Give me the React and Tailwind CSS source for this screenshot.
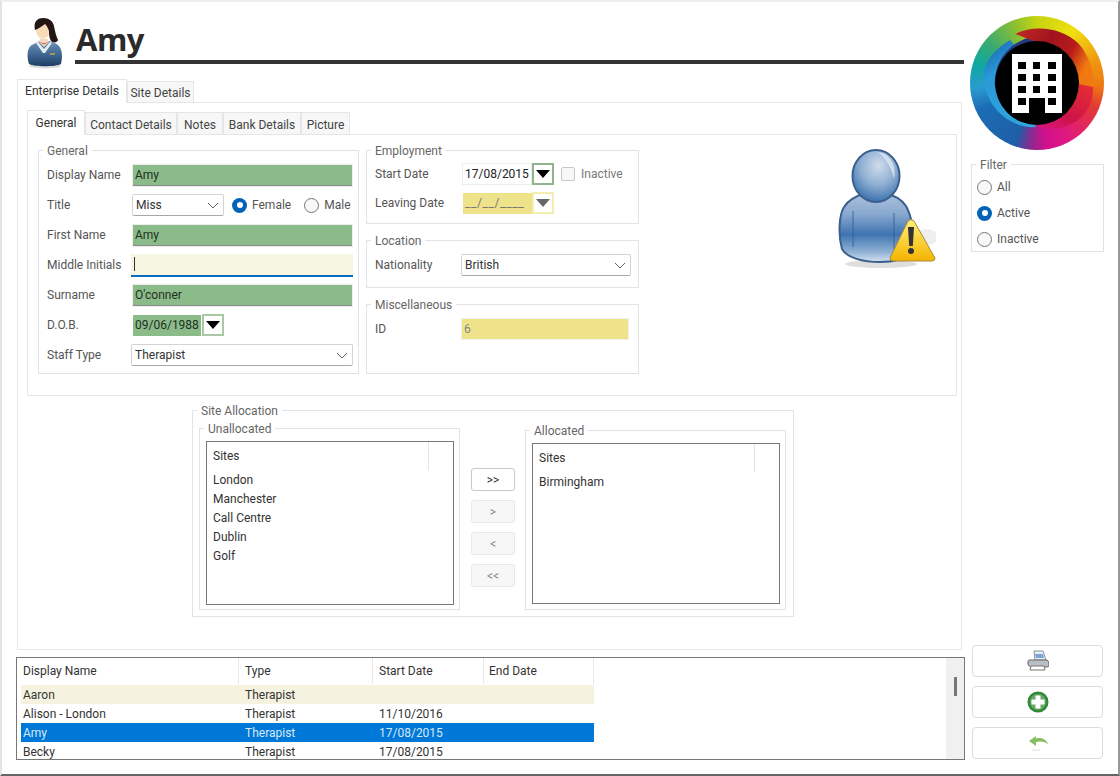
const F = "font-['Roboto','Noto_Sans',sans-serif]";

function Group({ label, className, children }) {
  return (
    <div className={"relative border border-[#e3e3e6] " + className}>
      <span className="absolute left-[4px] top-[-8px] bg-white px-[4px] text-[12px] leading-[16px] text-[#666]">{label}</span>
      {children}
    </div>
  );
}

function Row({ label, children, w = "w-[93px]" }) {
  return (
    <div className="flex h-[30px] items-center">
      <span className={"text-[12px] text-[#555] shrink-0 " + w}>{label}</span>
      {children}
    </div>
  );
}

function GreenInput({ value }) {
  return (
    <div className="flex h-[21px] w-[219px] items-center border-b border-[#8a8a8a] bg-[#8cbb8a] px-[2px] text-[12px] text-[#1f2f1f] shadow-[0_0_0_1px_#eee]">{value}</div>
  );
}

function Select({ value, className }) {
  return (
    <div className={"flex h-[22px] items-center justify-between rounded-[2px] border border-[#d4d4d4] border-b-[#a8a8a8] bg-white pl-[3px] pr-[4px] text-[12px] text-[#333] " + className}>
      <span>{value}</span>
      <svg width="12" height="7" viewBox="0 0 12 7" fill="none" stroke="#666" strokeWidth="1"><path d="M1 1l5 5 5-5" /></svg>
    </div>
  );
}

function Radio({ on, label, className = "" }) {
  return (
    <div className={"flex h-[16px] items-center gap-[5px] " + className}>
      {on ? (
        <span className="flex h-[15px] w-[15px] items-center justify-center rounded-full bg-[#0063b8]"><span className="h-[6px] w-[6px] rounded-full bg-white" /></span>
      ) : (
        <span className="h-[15px] w-[15px] rounded-full border border-[#777] bg-[#f8f8f8]" />
      )}
      <span className="text-[12px] text-[#555]">{label}</span>
    </div>
  );
}

function DateBtn({ ring, fill = "#000" }) {
  return (
    <span className={"flex h-[22px] w-[22px] items-center justify-center border-2 bg-white " + ring}>
      <svg width="14" height="8" viewBox="0 0 14 8"><path d="M0 0h14L7 8z" fill={fill} /></svg>
    </span>
  );
}

function Tab({ children, active, className = "" }) {
  return (
    <div className={"flex items-center justify-center border border-b-0 border-[#e6e6e8] text-[12px] " + (active ? "bg-white text-[#333] " : "bg-[#f7f7f7] text-[#444] ") + className}>{children}</div>
  );
}

function ListBox({ items, className }) {
  return (
    <div className={"border border-[#777] bg-white " + className}>
      <div className="flex h-[28px]">
        <div className="flex w-[222px] items-center border-r border-[#e5e5e5] pl-[6px] text-[12px] text-[#333]">Sites</div>
      </div>
      <div className="flex flex-col pl-[6px]">
        {items.map((s) => (
          <div key={s} className="flex h-[19px] items-center text-[12px] text-[#333]">{s}</div>
        ))}
      </div>
    </div>
  );
}

function MoveBtn({ label, on }) {
  return (
    <div className={"flex h-[23px] w-[44px] items-center justify-center rounded-[3px] border text-[12px] " + (on ? "border-[#c8c8c8] text-[#333] bg-white" : "border-[#e8e8e8] bg-[#f7f7f7] text-[#888]")}>{label}</div>
  );
}

function Logo() {
  return (
    <div className="relative h-[134px] w-[134px] rounded-full bg-[conic-gradient(from_0deg,#c6d412_0deg,#efe00f_35deg,#f09a10_68deg,#ee7a12_92deg,#e23a34_112deg,#e01880_150deg,#d0108c_172deg,#8a2a90_186deg,#1f5ea8_200deg,#1b6db4_245deg,#2a9ad0_265deg,#0fa8a0_288deg,#3aaa70_310deg,#8fc030_340deg,#c6d412_360deg)]">
      <svg className="absolute left-0 top-0" width="134" height="134" viewBox="0 0 134 134">
        <defs>
          <linearGradient id="lgA" x1="0" y1="0" x2="1" y2="0.4">
            <stop offset="0" stopColor="#c42a22" /><stop offset="0.45" stopColor="#a0141f" /><stop offset="0.75" stopColor="#b81a1c" /><stop offset="1" stopColor="#f07a10" />
          </linearGradient>
          <linearGradient id="lgB" x1="0.8" y1="0" x2="0.1" y2="1">
            <stop offset="0" stopColor="#e42c36" /><stop offset="0.6" stopColor="#cc1448" /><stop offset="1" stopColor="#d81480" />
          </linearGradient>
          <linearGradient id="lgC" x1="0.7" y1="1" x2="0.2" y2="0">
            <stop offset="0" stopColor="#2ea6de" /><stop offset="0.7" stopColor="#2a9ad8" /><stop offset="1" stopColor="#1c68b0" />
          </linearGradient>
        </defs>
        <path d="M66 111C42 113 15 92 14 62C13 50 20 36 40 24L70 60Z" fill="url(#lgC)" />
        <path d="M25 72C22 40 48 17 78 20L70 50Z" fill="#263a80" />
        <path d="M45 18C65 8 92 12 108 27C120 40 125 58 123 72L109 68A42 42 0 0 0 66 25.5C58 24 52 20 45 18Z" fill="url(#lgA)" />
        <path d="M123 71C124 92 110 108 90 112C80 114 70 112 63 109L67 109.5A42 42 0 0 0 109 68Z" fill="url(#lgB)" />
      </svg>
      <div className="absolute left-[25px] top-[25px] flex h-[84px] w-[84px] items-center justify-center rounded-full bg-black">
        <svg width="50" height="59" viewBox="0 0 50 59">
          <path fillRule="evenodd" fill="#fff" d="M0 0h50v59H33V44H17v15H0z
            M6 8v7h8V8z M21 8v7h7V8z M36 8v7h8V8z
            M6 20v7h8v-7z M21 20v7h7v-7z M36 20v7h8v-7z
            M6 32v7h8v-7z M21 32v7h7v-7z M36 32v7h8v-7z
            M6 44v7h8v-7z M36 44v7h8v-7z" />
        </svg>
      </div>
    </div>
  );
}

function Avatar() {
  return (
    <svg width="36" height="52" viewBox="0 0 36 52">
      <defs>
        <linearGradient id="suit" x1="0" y1="0" x2="0" y2="1"><stop offset="0" stopColor="#6f93b8" /><stop offset="0.6" stopColor="#3a618c" /><stop offset="1" stopColor="#1d3d63" /></linearGradient>
      </defs>
      <ellipse cx="19" cy="49" rx="16" ry="2.5" fill="#ddd" />
      <path d="M3 47C0 38 2 30 6 28c3-2 6-3 8-4h9c3 1 7 2 9 4 4 3 5 11 3 19-5 3-27 3-32 0z" fill="url(#suit)" />
      <path d="M14 22h8l1 3-5 5-5-5z" fill="#f3d9c0" />
      <path d="M12 25l6 7 6-7 2 1-7 10h-2L10 26z" fill="#e4ebf1" />
      <path d="M13 24.5l5 2 5-2-5 3z" fill="#c0392b" />
      <ellipse cx="17" cy="13" rx="7" ry="9" fill="#f8dcb8" />
      <path d="M9 13C7 4 12 1 17 1c6 0 10 3 11 8 1 5 2 10 4 14-1 3-5 3-7 1-2-3-2-7-2-10-1-3-2-5-4-7-3 2-7 5-10 6z" fill="#241612" />
      <path d="M24 37h5" stroke="#c9a34a" strokeWidth="1.5" />
    </svg>
  );
}

function Person() {
  return (
    <svg width="100" height="122" viewBox="0 0 100 122">
      <defs>
        <radialGradient id="head" cx="0.55" cy="0.3" r="0.75"><stop offset="0" stopColor="#cfdcec" /><stop offset="0.5" stopColor="#8fafd3" /><stop offset="1" stopColor="#2f69a8" /></radialGradient>
        <linearGradient id="body" x1="0" y1="0" x2="0" y2="1"><stop offset="0" stopColor="#a9c1dd" /><stop offset="0.3" stopColor="#8aa9cf" /><stop offset="0.6" stopColor="#3f74b2" /><stop offset="0.85" stopColor="#8fb0d4" /><stop offset="1" stopColor="#d5e2f0" /></linearGradient>
        <linearGradient id="warn" x1="0" y1="0" x2="0" y2="1"><stop offset="0" stopColor="#fff07a" /><stop offset="1" stopColor="#f4b400" /></linearGradient>
      </defs>
      <ellipse cx="45" cy="115" rx="36" ry="4" fill="#dedede" />
      <ellipse cx="90" cy="88" rx="12" ry="8" fill="#efefef" />
      <path d="M6 100C2 86 3 66 8 58c4-7 12-11 22-14h18c10 2 18 7 22 13 5 9 9 26 7 42-4 10-16 14-33 14-17 0-33-4-38-13z" fill="url(#body)" stroke="#3a5f8c" strokeWidth="2" />
      <path d="M17 62v36M58 64v36" stroke="#2f5f95" strokeWidth="1.2" opacity="0.7" />
      <ellipse cx="40" cy="27" rx="23.5" ry="26" fill="url(#head)" stroke="#3a5f8c" strokeWidth="2" />
      <path d="M42 3c12 2 19 13 16 27-2-10-7-20-16-27z" fill="#e4ecf5" opacity="0.7" />
      <path d="M54 109L72 72q3-3 6 0L99 109q0 3-3 3H57q-3 0-3-3z" fill="url(#warn)" stroke="#a98a3c" strokeWidth="1" />
      <path d="M72 78h6l-1.2 19h-3.6z" fill="#333" />
      <circle cx="75" cy="102" r="3" fill="#333" />
    </svg>
  );
}

function Printer() {
  return (
    <svg width="22" height="22" viewBox="0 0 22 22">
      <path d="M7 1h9l3 9H8z" fill="#e8eef5" stroke="#8a94a0" />
      <path d="M8 4h8l1 4H9z" fill="#7fa4d4" />
      <path d="M2 10h18q2 1 2 4v2q-1 1-3 1H4q-3-1-3-3v-2q0-2 1-2z" fill="#b8bec6" stroke="#666" />
      <path d="M4 16h13l1 4H3z" fill="#fff" stroke="#777" />
    </svg>
  );
}

function Plus() {
  return (
    <svg width="22" height="22" viewBox="0 0 22 22">
      <circle cx="11" cy="11" r="10.5" fill="#2f8a34" />
      <circle cx="11" cy="11" r="8" fill="#6aa56b" />
      <path d="M8.5 4.5h5v4h4v5h-4v4h-5v-4h-4v-5h4z" fill="#fff" />
    </svg>
  );
}

function Back() {
  return (
    <svg width="20" height="18" viewBox="0 0 20 18">
      <path d="M1 7L8 2v2.5C13 3 18 5 20 10 16 7 12 7 8 8v4z" fill="#86c060" />
      <path d="M4 16h8" stroke="#ddd" strokeWidth="1" />
    </svg>
  );
}

function ActionBtn({ children }) {
  return <div className="flex h-[32px] w-[131px] items-center justify-center rounded-[4px] border border-[#dcdcdc] bg-white">{children}</div>;
}

const rows = [
  { n: "Aaron", t: "Therapist", s: "", c: "bg-[#f5f3e0] text-[#333]" },
  { n: "Alison - London", t: "Therapist", s: "11/10/2016", c: "text-[#333]" },
  { n: "Amy", t: "Therapist", s: "17/08/2015", c: "bg-[#0078d7] text-[#d7e8f7]" },
  { n: "Becky", t: "Therapist", s: "17/08/2015", c: "text-[#333]" },
];

export default function App() {
  return (
    <div className={"flex h-[776px] w-[1120px] overflow-hidden border-x-2 border-t-2 border-b-2 border-x-[#e4e4e4] border-t-[#eee] border-b-[#666] border-r-[#999] bg-white " + F}>
      <div className="ml-[14px] flex w-[948px] shrink-0 flex-col">
        {/* header */}
        <div className="flex h-[77px] shrink-0 pl-[10px] pt-[15px]">
          <Avatar />
          <div className="ml-[13px] flex h-[47px] flex-1 flex-col justify-end">
            <div className="pl-[1px] font-['Open_Sans',sans-serif] text-[31px] font-bold leading-[38px] tracking-[-0.5px] text-[#2b2b2b]">Amy</div>
            <div className="mt-[2px] h-[4px] w-[889px] bg-[#333]" />
          </div>
        </div>

        {/* top tabs */}
        <div className="flex h-[23px] shrink-0 items-end pl-[1px]">
          <Tab active className="z-10 mb-[-1px] h-[24px] w-[110px] pb-[2px]">Enterprise Details</Tab>
          <Tab className="h-[21px] w-[67px] pt-[2px]">Site Details</Tab>
        </div>

        {/* outer panel */}
        <div className="ml-[1px] flex h-[548px] w-[945px] shrink-0 flex-col border border-[#e6e6e8] pl-[9px] pt-[7px]">
          <div className="flex h-[24px] items-end">
            <Tab active className="z-10 mb-[-1px] h-[25px] w-[58px]">General</Tab>
            <Tab className="h-[22px] w-[92px] pt-[3px]">Contact Details</Tab>
            <Tab className="h-[22px] w-[46px] pt-[3px]">Notes</Tab>
            <Tab className="h-[22px] w-[78px] pt-[3px]">Bank Details</Tab>
            <Tab className="h-[22px] w-[49px] pt-[3px]">Picture</Tab>
          </div>

          <div className="flex h-[262px] w-[930px] shrink-0 border border-[#e6e6e8] pl-[10px] pt-[15px]">
            <Group label="General" className="h-[224px] w-[321px] shrink-0 pl-[8px] pt-[9px]">
              <Row label="Display Name" w="w-[86px]"><GreenInput value="Amy" /></Row>
              <Row label="Title" w="w-[85px]">
                <Select value="Miss" className="w-[92px]" />
                <Radio on label="Female" className="ml-[8px]" />
                <Radio label="Male" className="ml-[13px]" />
              </Row>
              <Row label="First Name" w="w-[86px]"><GreenInput value="Amy" /></Row>
              <Row label="Middle Initials" w="w-[84px]">
                <div className="flex h-[23px] w-[222px] items-center border-b-2 border-[#0a6cc0] bg-[#f6f5e2] pl-[3px]">
                  <span className="h-[14px] w-[1px] bg-[#333]" />
                </div>
              </Row>
              <Row label="Surname" w="w-[86px]"><GreenInput value="O'conner" /></Row>
              <Row label="D.O.B." w="w-[86px]">
                <div className="flex h-[21px] w-[68px] items-center bg-[#8cbb8a] pl-[2px] text-[12px] text-[#1f2f1f]">09/06/1988</div>
                <DateBtn ring="ml-[1px] border-[#a8c8a6]" />
              </Row>
              <Row label="Staff Type" w="w-[84px]"><Select value="Therapist" className="w-[222px]" /></Row>
            </Group>

            <div className="ml-[7px] flex w-[273px] shrink-0 flex-col">
              <Group label="Employment" className="h-[74px] pl-[8px] pt-[8px]">
                <div className="flex h-[29px] items-center">
                  <span className="w-[87px] text-[12px] text-[#555]">Start Date</span>
                  <div className="flex h-[22px] w-[70px] items-center border border-[#eee] pl-[2px] text-[12px] text-[#222]">17/08/2015</div>
                  <DateBtn ring="border-[#8fb48f]" />
                  <span className="ml-[7px] h-[14px] w-[14px] rounded-[2px] border border-[#c8c8c8] bg-[#f8f8f8]" />
                  <span className="ml-[6px] text-[12px] text-[#777]">Inactive</span>
                </div>
                <div className="flex h-[29px] items-center pt-[1px]">
                  <span className="w-[88px] text-[12px] text-[#555]">Leaving Date</span>
                  <div className="flex h-[21px] w-[69px] items-center bg-[#eee38a] pl-[2px] text-[12px] tracking-[0.6px] text-[#777]">__/__/____</div>
                  <DateBtn ring="border-[#f2eeb0]" fill="#666" />
                </div>
              </Group>
              <Group label="Location" className="mt-[16px] h-[48px] pl-[8px] pt-[13px]">
                <div className="flex items-center">
                  <span className="w-[86px] text-[12px] text-[#555]">Nationality</span>
                  <Select value="British" className="w-[170px]" />
                </div>
              </Group>
              <Group label="Miscellaneous" className="mt-[16px] h-[70px] pl-[8px] pt-[14px]">
                <div className="flex items-center">
                  <span className="w-[87px] text-[12px] text-[#555]">ID</span>
                  <div className="flex h-[20px] w-[166px] items-center bg-[#eee38a] pl-[2px] text-[12px] text-[#888] shadow-[0_0_0_1px_#f0f0f0]">6</div>
                </div>
              </Group>
            </div>

            <div className="ml-[197px] mt-[-1px] shrink-0"><Person /></div>
          </div>

          <div className="ml-[165px] mt-[14px] w-[602px]">
            <Group label="Site Allocation" className="flex h-[207px] pl-[6px] pt-[17px]">
              <Group label="Unallocated" className="h-[182px] w-[261px] shrink-0 pl-[6px] pt-[12px]">
                <ListBox items={["London", "Manchester", "Call Centre", "Dublin", "Golf"]} className="h-[164px] w-[248px]" />
              </Group>
              <div className="ml-[11px] flex w-[44px] shrink-0 flex-col gap-[9px] pt-[40px]">
                <MoveBtn on label=">>" />
                <MoveBtn label=">" />
                <MoveBtn label="<" />
                <MoveBtn label="<<" />
              </div>
              <Group label="Allocated" className="ml-[10px] mt-[2px] h-[180px] w-[261px] shrink-0 pl-[6px] pt-[12px]">
                <ListBox items={["Birmingham"]} className="h-[161px] w-[248px]" />
              </Group>
            </Group>
          </div>
        </div>

        {/* table */}
        <div className="mt-[7px] flex h-[103px] w-[949px] shrink-0 border border-[#777] pl-[4px]">
          <div className="flex w-[573px] shrink-0 flex-col">
            <div className="flex h-[27px] shrink-0 items-center pb-[1px] text-[12px] text-[#333]">
              <div className="flex h-full w-[218px] items-center border-r border-[#e8e8e8] pl-[2px]">Display Name</div>
              <div className="flex h-full w-[134px] items-center border-r border-[#e8e8e8] pl-[6px]">Type</div>
              <div className="flex h-full w-[111px] items-center border-r border-[#e8e8e8] pl-[6px]">Start Date</div>
              <div className="flex h-full w-[110px] items-center border-r border-[#e8e8e8] pl-[5px]">End Date</div>
            </div>
            {rows.map((r) => (
              <div key={r.n} className={"flex h-[19px] shrink-0 items-center text-[12px] " + r.c}>
                <div className="w-[224px] pl-[2px]">{r.n}</div>
                <div className="w-[134px]">{r.t}</div>
                <div>{r.s}</div>
              </div>
            ))}
          </div>
          <div className="ml-auto flex w-[18px] justify-center bg-[#f0f0f0] pt-[19px]">
            <div className="h-[19px] w-[3px] bg-[#777]" />
          </div>
        </div>
      </div>

      {/* right column */}
      <div className="ml-[6px] flex w-[134px] shrink-0 flex-col">
        <div className="mt-[14px]"><Logo /></div>
        <Group label="Filter" className="mt-[14px] ml-[1px] h-[88px] w-[133px] pl-[5px]">
          <Radio label="All" className="mt-[14px]" />
          <Radio on label="Active" className="mt-[10px]" />
          <Radio label="Inactive" className="mt-[10px]" />
        </Group>
        <div className="ml-[2px] mt-[393px] flex flex-col gap-[9px]">
          <ActionBtn><Printer /></ActionBtn>
          <ActionBtn><Plus /></ActionBtn>
          <ActionBtn><Back /></ActionBtn>
        </div>
      </div>
    </div>
  );
}
